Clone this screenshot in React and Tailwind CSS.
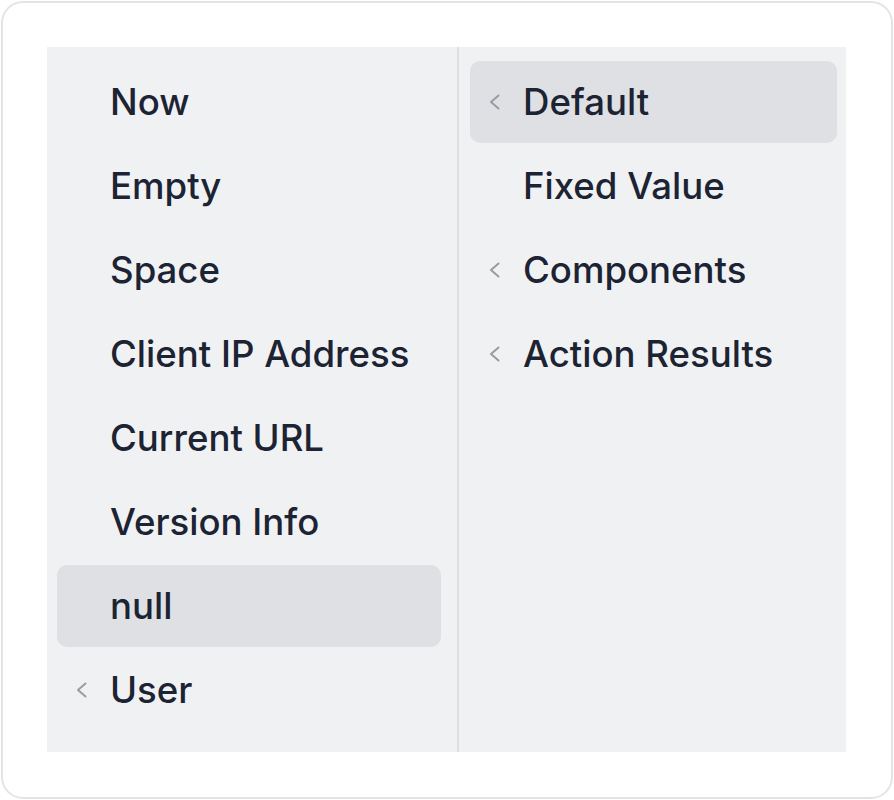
import React from 'react'

const leftItems = [
  { label: 'Now' },
  { label: 'Empty' },
  { label: 'Space' },
  { label: 'Client IP Address' },
  { label: 'Current URL' },
  { label: 'Version Info' },
  { label: 'null', active: true },
  { label: 'User', sub: true },
]

const rightItems = [
  { label: 'Default', sub: true, active: true },
  { label: 'Fixed Value' },
  { label: 'Components', sub: true },
  { label: 'Action Results', sub: true },
]

const Chevron = () => (
  <svg width="14" height="20" viewBox="0 0 14 20" fill="none">
    <path d="M11.5 3.5 L4 10 L11.5 16.5" stroke="#989ba3" strokeWidth="2" strokeLinecap="round" strokeLinejoin="round" />
  </svg>
)

const MenuItem = ({ label, sub, active }) => (
  <div
    className={`relative flex items-center h-[82px] mb-[2px] rounded-[10px] pl-[53px] ${
      active ? 'bg-[#dfe0e4]' : ''
    }`}
  >
    {sub && (
      <span className="absolute left-[17px] top-1/2 -translate-y-1/2 flex">
        <Chevron />
      </span>
    )}
    <span className="text-[36.6px] font-medium text-[#1c2333] leading-none whitespace-nowrap">{label}</span>
  </div>
)

export default function App() {
  return (
    <div className="w-[894px] h-[800px] p-px bg-white" style={{ fontFamily: 'Inter, "Noto Sans", sans-serif' }}>
      <div className="h-full rounded-[22px] border-2 border-[#e2e4e8] bg-white p-[44px]">
        <div className="flex w-[799px] h-[705px] bg-[#f0f1f3]">
          <div className="w-[412px] border-r-2 border-[#dcdee2] pt-[14px] pl-[10px] pr-[16px]">
            {leftItems.map((item) => (
              <MenuItem key={item.label} {...item} />
            ))}
          </div>
          <div className="flex-1 pt-[14px] pl-[11px] pr-[9px]">
            {rightItems.map((item) => (
              <MenuItem key={item.label} {...item} />
            ))}
          </div>
        </div>
      </div>
    </div>
  )
}
